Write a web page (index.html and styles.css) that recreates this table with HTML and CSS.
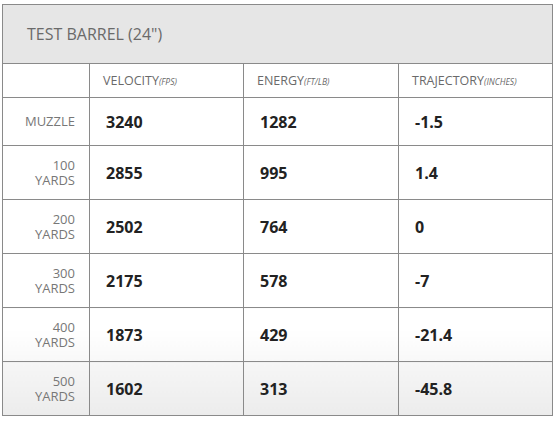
FILE: index.html
```html
<!DOCTYPE html>
<html>
<head>
<meta charset="utf-8">
<link rel="stylesheet" href="styles.css">
</head>
<body>
<div class="wrap">
<table class="ballistics">
  <colgroup>
    <col class="c-label">
    <col class="c-val">
    <col class="c-val2">
    <col class="c-val">
  </colgroup>
  <thead>
    <tr class="title-row"><th colspan="4" class="title">TEST BARREL (24")</th></tr>
    <tr class="head-row">
      <th></th>
      <th class="colhead">VELOCITY<em>(FPS)</em></th>
      <th class="colhead">ENERGY<em>(FT/LB)</em></th>
      <th class="colhead">TRAJECTORY<em>(INCHES)</em></th>
    </tr>
  </thead>
  <tbody>
    <tr class="row-first"><td class="label">MUZZLE</td><td class="val">3240</td><td class="val">1282</td><td class="val">-1.5</td></tr>
    <tr class="row"><td class="label">100<br>YARDS</td><td class="val">2855</td><td class="val">995</td><td class="val">1.4</td></tr>
    <tr class="row"><td class="label">200<br>YARDS</td><td class="val">2502</td><td class="val">764</td><td class="val">0</td></tr>
    <tr class="row"><td class="label">300<br>YARDS</td><td class="val">2175</td><td class="val">578</td><td class="val">-7</td></tr>
    <tr class="row row-fade"><td class="label">400<br>YARDS</td><td class="val">1873</td><td class="val">429</td><td class="val">-21.4</td></tr>
    <tr class="row row-last"><td class="label">500<br>YARDS</td><td class="val">1602</td><td class="val">313</td><td class="val">-45.8</td></tr>
  </tbody>
</table>
</div>
</body>
</html>
```
FILE: styles.css
```css
html, body {
  margin: 0;
  padding: 0;
  background: #fff;
}
.wrap {
  padding: 4px 0 0 2px;
}
.ballistics {
  border-collapse: collapse;
  table-layout: fixed;
  width: 551px;
  font-family: "Open Sans", "Liberation Sans", sans-serif;
  border: 1px solid #8a8a8a;
}
.c-label { width: 87px; }
.c-val { width: 154px; }
.c-val2 { width: 155px; }
.ballistics th, .ballistics td {
  border: 1px solid #8a8a8a;
  padding: 0;
  box-sizing: border-box;
}
.title-row th {
  background: #e6e6e6;
  height: 59px;
  text-align: left;
  font-weight: normal;
  font-size: 16px;
  color: #6a6a6a;
  padding: 0 0 0 24px;
}
.head-row th {
  height: 34px;
  font-weight: normal;
  text-align: left;
  vertical-align: top;
  padding: 10px 0 0 13px;
  font-size: 12.5px;
  line-height: 14px;
  color: #6a6a6a;
}
.colhead em {
  font-style: italic;
  font-size: 8.5px;
}
.row-first td { height: 48px; }
.row td { height: 54px; }
.label {
  text-align: right;
  padding-right: 14px !important;
  font-size: 13px;
  line-height: 15px;
  color: #777;
}
.val {
  font-weight: bold;
  font-size: 16px;
  color: #222;
  padding-left: 16px !important;
}
.row-fade td {
  background: linear-gradient(#ffffff 40%, #f8f8f8);
}
.row-last td {
  background: linear-gradient(#f6f6f6, #ececec);
}
```
